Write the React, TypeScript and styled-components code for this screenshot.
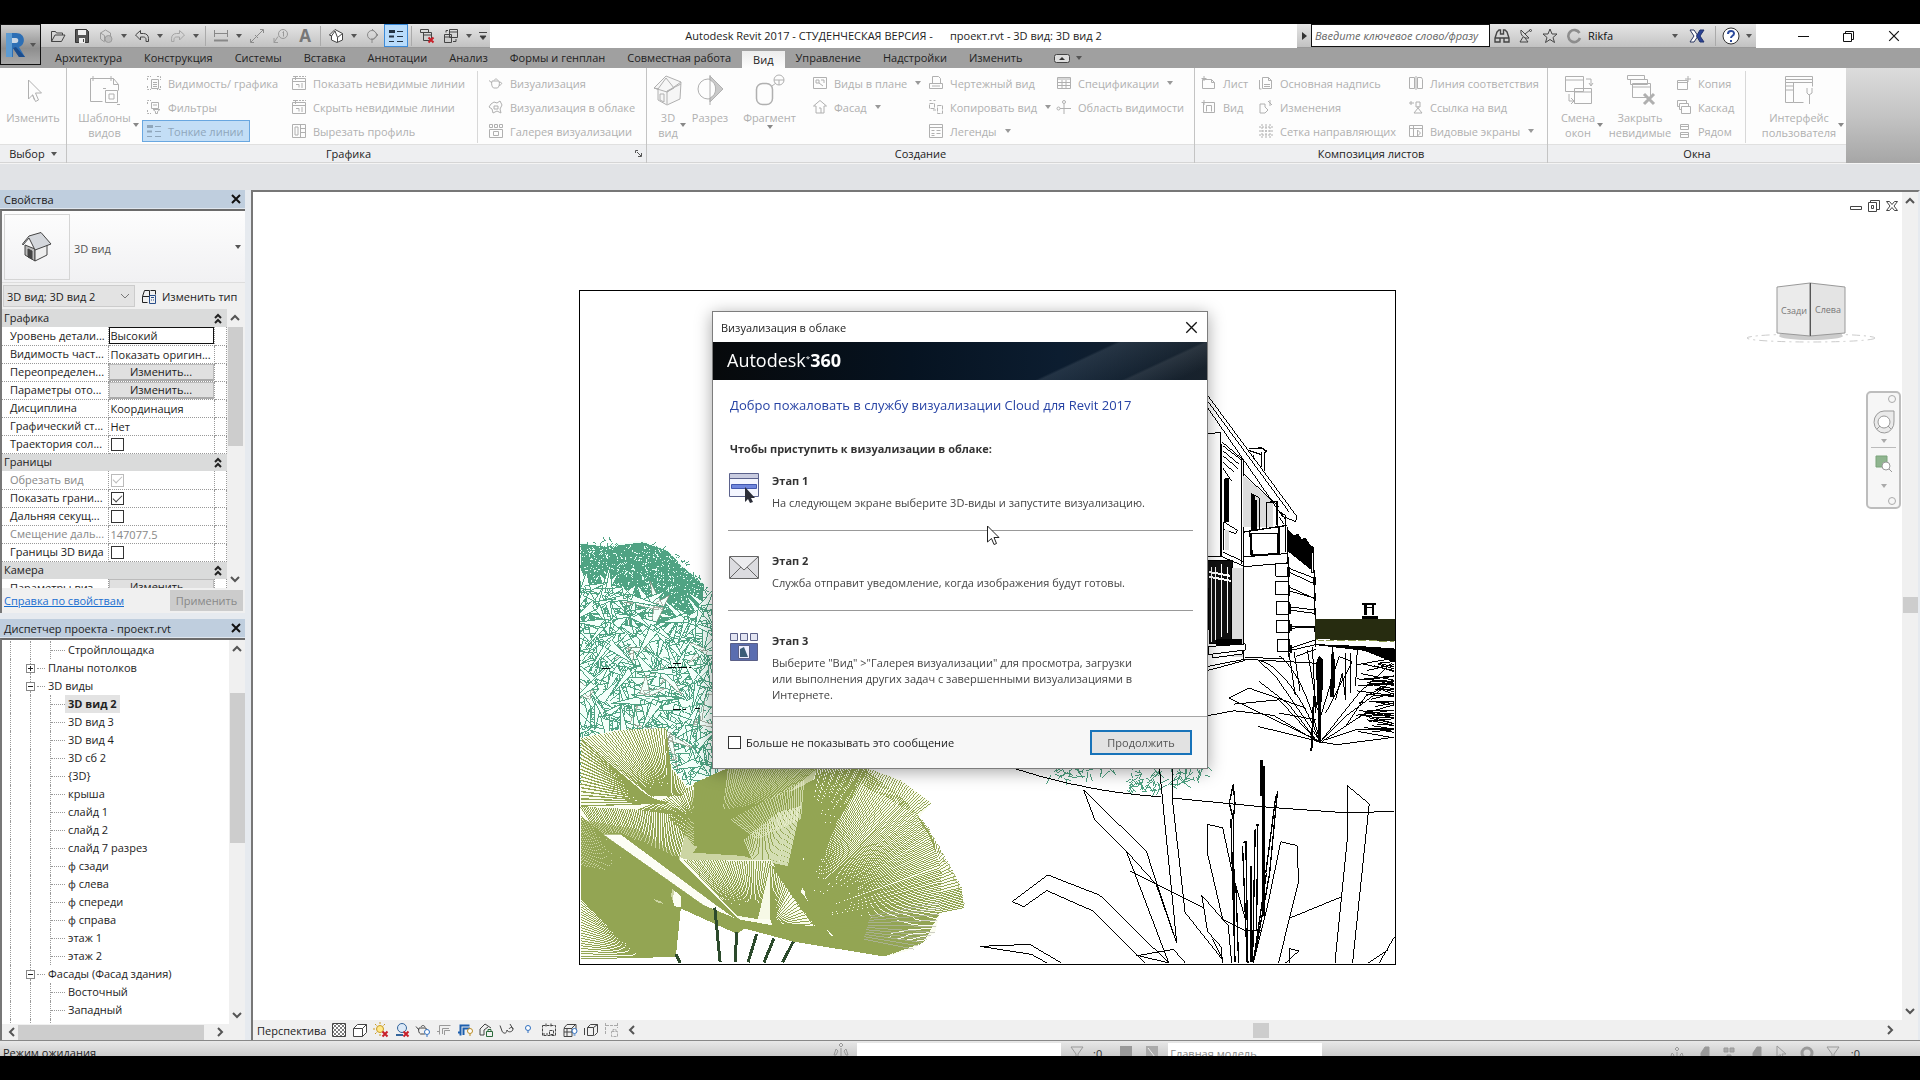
import React from "react";
import styled, { createGlobalStyle, css } from "styled-components";

const FONT = '"Open Sans", "Noto Sans", sans-serif';

const GlobalStyle = createGlobalStyle`
  * { box-sizing: border-box; }
  body { margin: 0; background: #000; overflow: hidden; }
  body, button, input, select, table { font-family: ${FONT}; font-size: 11px; color: #1c1c1c; }
  button, input, select { margin: 0; padding: 0; border: 0; background: none; border-radius: 0; }
  button { white-space: nowrap; }
  svg { display: block; flex: none; }
`;

/* ---------- icons ---------- */

const RED_X = <path d="M9.500 9.500l5 5M14.500 9.500l-5 5" stroke="#c8202a" strokeWidth="2" />;
const BULB = (x: number, y: number, c = "#2f6fc0") => (
  <g stroke={c} fill="#fff"><circle cx={x} cy={y} r="2.500" /><path d={`M${x - 1} ${y + 4}h2`} /></g>
);
const PAGE = <path d="M4.500 2.500h6l3 3v8h-9zM10.500 2.500v3h3" />;

const icons: Record<string, React.ReactNode> = {
  open: <path d="M1.500 13.500v-10h4l1 1.500h6v2M1.500 13.500l3.500-6.500h10l-3.500 6.500z" />,
  save: <><path d="M1.500 1.500h11l2 2v11h-13z" fill="#555" stroke="#333" /><path d="M4 2h8v5H4zM5 10h6v5H5z" fill="#eee" stroke="none" /><path d="M9.500 11v3" /></>,
  sync: <g stroke="#9b9b9b"><path d="M2.500 5l5-3 5 3v3M2.500 5v6l4 3M2.500 5l4 2.500v6" /><circle cx="10.500" cy="11" r="3.500" fill="#bbb" /></g>,
  undo: <path d="M1.500 7l5-4.500v3h3c3 0 5 2 5 5v3h-2.500v-2c0-1.500-1-2.500-2.500-2.500h-3v3z" />,
  redo: <path d="M14.500 7l-5-4.500v3h-3c-3 0-5 2-5 5v3h2.500v-2c0-1.500 1-2.500 2.500-2.500h3v3z" stroke="#a5a5a5" />,
  dim: <g stroke="#888"><path d="M1.500 2v7M14.500 2v7M2 5.500h12" /><path d="M1 12.500h14" strokeWidth="2" /></g>,
  measure: <path d="M2 14L14 2M1.500 11v3.500H5M11 1.500h3.500V5M6 7l3 3" stroke="#8b8b8b" />,
  tag: <g stroke="#999"><circle cx="10" cy="6" r="4.500" /><path d="M1 14.500l4-6M9.500 4.500l1-1v5M1 10v4.500h4" /></g>,
  house: <><path d="M1.500 7L7 1.500l7.500 4V12L9 14.500 3.500 12V8z" fill="#fff" /><path d="M1.500 7l2 1L7 3l2.500 6.500V14M9.500 9.500l5-4" /></>,
  section: <g stroke="#8a8a8a"><circle cx="8" cy="7" r="4.500" /><path d="M8 1l6 6-6 5M8 10v5" /></g>,
  thin: <g><path d="M1 3.500h6" strokeWidth="3" /><path d="M1 8.500h5" strokeWidth="2" /><path d="M1 13.500h5M9 3.500h6M9 8.500h6M9 13.500h6" /></g>,
  closeHidden: <><path d="M1.500 1.500h8v3h-8zM4.500 4.500h8v8h-8zM4.500 7h8" />{RED_X}</>,
  switchWin: <path d="M6.500 1.500h8v8h-8zM6.500 4h8M1.500 6.500h7v8h-7zM1.500 9h7M3 4.500V2.500h2M13 11v2.500h-3" />,
  custom: <path d="M4 4.500h8M5 8l3 3.500L11 8z" fill="#333" />,
  binoc: <path d="M3 4l2-2h1.500v4h3V2H11l2 2 2 6v4h-5v-4H6v4H1v-4zM1 10h5M10 10h5" strokeWidth="1.400" />,
  sat: <><path d="M3 2c-1 5 3 9 8 8zM7 6l5-4M5 9l-3 5h8l-3-4" /><circle cx="12.500" cy="2.500" r="1" /></>,
  star: <path d="M8 1l2 5h5l-4 3.500 1.500 5L8 11.500l-4.500 3 1.500-5L1 6h5z" />,
  cring: <path d="M13.500 5A6 6 0 1 0 14 10" stroke="#8d8d8d" strokeWidth="2.600" />,
  exch: <><path d="M1 2h4l4 6-4 6H1l4-6z" fill="#fff" stroke="#2a3660" /><path d="M15 2h-4L7.500 8l3.500 6h4l-4-6z" fill="#2a4296" stroke="#22346e" /></>,
  cursor: <path d="M4 1v11.500l3-3 2 5 2-1-2-4.500h4z" />,
  sheetList: <><path d="M1.500 5v-3.500H5M11 1.500h3.500V5M1.500 11v3.500H5M14.500 11v3.500H11" strokeDasharray="2 1" /><path d="M5.500 4.500h7v9h-7zM7 7.500h4M7 9.500h4M7 11.500h4" /></>,
  filter: <><path d="M1.500 5v-3.500H5M1.500 11v3.500H5" strokeDasharray="2 1" /><path d="M5.500 3.500h7v6h-7zM7 6h4M7 10.500h7l-2.500 2v2h-2v-2z" /></>,
  hidden: <><path d="M1.500 14.500v-11h13v11zM4.500 1v4M1 6.500h14M5 9.500h3v3M11 8v5" /><path d="M2 1.500h13" strokeDasharray="2 1" /></>,
  profile: <path d="M1.500 1.500h13v13h-13zM4 4h3v8H4zM9.500 2v12M10 5.500h4M10 9.500h4" />,
  teapot: <path d="M4 6h7c1 3 0 6-1.500 7h-4C4 12 3 9 4 6zM4 8L1 5.500M11 7.500c3-1 4 2 0 3M6 5.500c1-2 3-2 4 0" />,
  cloudpot: <path d="M3 5l3-2 3 1 3-2 2 4-2 4 1 4-4-2-4 2-1-4-3-2zM6 7h4v3H6z" />,
  gallery: <path d="M1.500 1.500h3v3h-3zM6.500 1.500h3v3h-3zM11.500 1.500h3v3h-3zM1.500 6.500h13v8h-13zM5.500 8.500h5v4h-5z" />,
  plan: <path d="M1.500 2.500h13v11h-13zM4 5h3v3H4zM7 8l4 3M9 5h3v3" />,
  facade: <path d="M8 1.500L14.500 7H12v7H4V7H1.500zM7 9h2v5" />,
  draft: <path d="M4.500 1.500h6l2 2v5h-8zM1.500 8.500h13v5h-13zM4 11h8" />,
  dup: <path d="M1.500 1.500h2M5.500 1.500h2M1.500 4.500h5v5h-5zM9.500 6.500h5v8h-5zM8 11H5" strokeDasharray="4 1" />,
  legend: <path d="M1.500 1.500h13v13h-13zM1.500 4.500h13M3.500 7.500h3M3.500 10.500h3M8.500 7.500h4M8.500 10.500h4M3.500 12.500h3" />,
  sched: <path d="M1.500 2.500h13v11h-13zM1.500 4h13M1.500 7.500h13M1.500 10.500h13M6 5v8M10 5v8" />,
  scope: <><path d="M8 5v10M4 9.500h11" /><circle cx="8" cy="3" r="1.500" /><circle cx="2.500" cy="9.500" r="1.500" /></>,
  sheet: <><path d="M1.500 4.500h9l3 3v6h-12zM10.500 4.500v3h3" /><path d="M3 1v5M.5 3.500h5" /></>,
  viewSheet: <><path d="M2.500 3.500h11v10h-11z" /><path d="M5.500 6.500h5v6M5.500 6.500v6M3 1v5M.5 3.500h5" /></>,
  page: <>{PAGE}<path d="M6 9.500h6M6 11.500h6M1.500 5v9h2" /></>,
  revise: <path d="M2 5h5v3l3 3-3 3H2zM10 2l4 4M12 1v6" />,
  gridIc: <path d="M1 4h14M1 8h14M1 12h14M4 1v14M8 1v14M12 1v14" strokeDasharray="2 1" />,
  match: <path d="M1.500 2.500h5v11h-5zM9.500 2.500h4l1 2v9h-5zM8 1v14" />,
  ref: <path d="M1 4h5M3 2v4M8 3h4v5H8zM6 14l4-5 4 5zM10 9v-2" />,
  viewport: <path d="M1.500 2.500h13v11h-13zM1.500 5.500h13M5.500 2.500v11M9.500 7v6l3-3z" />,
  copyWin: <path d="M1.500 5.500h10v9h-10zM1.500 7.500h10M12 1v6M9 4h6" />,
  cascade: <path d="M1.500 1.500h9v3M1.500 1.500v6h2M3.500 4.500h9v3M3.500 4.500v6h2M5.500 7.500h9v7h-9z" />,
  tile: <path d="M4.500 1.500h8v5h-8zM4.500 9.500h8v5h-8zM4.500 3.500h8M4.500 11.500h8" />,
  detail: <><path d="M1.500 1.500h13v13h-13z" fill="#fff" /><path d="M2 2l12 12M2 6l8 8M2 10l4 4M6 2l8 8M10 2l4 4M14 2L2 14M10 2L2 10M6 2L2 6M14 6l-8 8M14 10l-4 4" strokeWidth=".7" /></>,
  box: <path d="M1.500 6.500h9v8h-9zM1.500 6.500l4-4h9v8l-4 4M10.500 6.500l4-4" fill="#fff" />,
  sunOff: <><circle cx="7" cy="7" r="3.500" stroke="#c99a22" fill="#ffe98c" /><path d="M7 0v2M7 12v2M0 7h2M2 2l1.500 1.500M12 2l-1.500 1.500M2 12l1.500-1.500" stroke="#c99a22" />{RED_X}</>,
  shadowOff: <><circle cx="8" cy="6" r="4.500" fill="#dce9f7" stroke="#34659c" /><path d="M2 13h7" stroke="#34659c" strokeWidth="2" />{RED_X}</>,
  render: <><path d="M4 6h7c1 3 0 5-1.500 6h-4C4 11 3 9 4 6zM4 8L1 4.500M6 5c1-2 3-2 4 0" />{BULB(12, 10)}</>,
  crop: <path d="M3.500 12.500v-9h11M6.500 12V6.500H13M1 9.500h3M8.500 13V8.500H14" stroke="#999" />,
  cropShow: <><path d="M3.500 13.500v-10h9M6.500 13V6.500H13M1 10.500h3" stroke="#1c5fae" strokeWidth="2" />{BULB(13, 9, "#b98a20")}</>,
  lock3d: <><path d="M2 7l5-5 6 4M2 7v6h4M6 13V8l4-3" /><path d="M8.500 9.500h6v5h-6zM10 9V7.500h3V9" stroke="#2a6a3a" /></>,
  glasses: <path d="M1 3.500l2 5.500c1 3 5 3 5-1M8 8c1 3 6 2 6-1 0-2-3-2-4 0M14 7L11 2" />,
  bulb: BULB(8, 6),
  temp: <path d="M1.500 3.500h13v10h-13zM5 1.500v3M10 1.500v3M8.500 8.500h4v4h-4zM1 12h6" strokeDasharray="3 1" />,
  analytic: <><path d="M2 6.500h8v8H2zM5 6v8M2 10h8M5 2.500h9v8M10 6l4-4M5 2.500L2 6" />{BULB(12.500, 9)}</>,
  displace: <path d="M4.500 5.500h6v8h-6zM4.500 5.500l3-3h7v8l-3 3M10.500 5.500l4-3M1.500 6v7" />,
  constr: <path d="M1.500 1v12M13.500 1v5M2 3.500h11M7.500 9.500h6v5h-6zM9 9V7.500h3V9" stroke="#aaa" strokeDasharray="3 1" />,
  typeEdit: <><path d="M1.500 8.500l2-6h5v6zM9.500 2.500h5v4M1.500 8.500v6h5" /><path d="M8.500 7.500h6v8h-6zM10 9.500h3M10 12h1M12 12h1" stroke="#2a4f8a" /></>,
  people: <path d="M8 2l2 2-2 2-2-2zM3 8l2 2-2 4H1zM13 8l-2 2 2 4h2zM8 7v8" />,
  funnel: <path d="M2 2h12l-5 7v6l-2-2V9z" />,
  blockA: <path d="M2 1h12v14H2z" fill="#999" stroke="none" />,
  blockB: <><path d="M2 1h12v14H2z" fill="#aaa" stroke="none" /><path d="M4 3l7 9" stroke="#eee" /></>,
  link: <path d="M3 3h4v4H3zM9 3h4v4H9zM6 10h4v5H6z" fill="#aaa" />,
  pin: <path d="M6 15V8l4-6h4v13z" fill="#999" stroke="#999" />,
  gear: <circle cx="8" cy="8" r="5" strokeWidth="3" />,
};

const Icon = ({ name, size = 16 }: { name: string; size?: number }) => (
  <svg width={size} height={size} viewBox="0 0 16 16" fill="none" stroke="currentColor" aria-hidden>
    {icons[name]}
  </svg>
);

const bigIcons: Record<string, React.ReactNode> = {
  cursor: <path d="M11.500 6v19l4-4 2 5M11.500 6l13 13h-6l3 7-3 1.500-3-7" />,
  template: <path d="M1.500 4.500h23l5 6v6M24.500 4.500v6h5M1.500 4.500v23h12M4 2v5M22 2v5M16.500 16.500h12v12h-12zM14 14.500h3M28 30.500h3M20 20h5v5h-5z" />,
  house: <><path d="M2 14L14 2l15 6-1 17-13 6-9-5V15z" fill="#f6f6f6" /><path d="M2 14l4 1 8-11 8 10-7 4 14-10M15 30V17l14-7M2 14l13 4M8 20h4v8l-4-2z" /></>,
  section: <><circle cx="14" cy="15" r="10" /><path d="M16 2l13 13-13 13V24a10 10 0 0 0 0-18z" fill="#c9c9c9" /><path d="M16 1v30" /></>,
  callout: <><rect x="2.500" y="9.500" width="16" height="21" rx="6" strokeWidth="1.500" /><circle cx="25" cy="6" r="5" /><path d="M18 12l4-3M20 6h10M25 6v5" /></>,
  swap: <path d="M3.500 2.500h18v15h-18zM3.500 6h18M12.500 14.500h17v15h-17zM12.500 18h17M24 5h5v6M27 9l2 3 2-3M7 20v7h4M9 24l3 3-3 3" />,
  closeHid: <><path d="M3.500 1.500h17v4h-17zM6.500 5.500h17v5h-17zM8.500 9.500h18v14h-18zM8.500 13h18" /><path d="M20 20l10 10M30 20L20 30" strokeWidth="3" /></>,
  ui: <path d="M2.500 2.500h27v6h-27zM2.500 5.500h27M2.500 8.500h8v20h-8zM2.500 12h8M2.500 16h8M10.500 28.500h10M10.500 8.500h19v4M24 14v5l2 2 3-2v-5M26.500 21v9" />,
};
const BigIcon = ({ name }: { name: string }) => (
  <svg width="32" height="32" viewBox="0 0 32 32" fill="none" stroke="currentColor" aria-hidden>{bigIcons[name]}</svg>
);

const Caret = styled.span`
  width: 0; height: 0; flex: none;
  border: 3px solid transparent; border-top: 4px solid #555; border-bottom: 0;
`;
const Chevron = ({ dir }: { dir: "up" | "down" | "left" | "right" }) => {
  const d = { up: "M2 8l4-4 4 4", down: "M2 4l4 4 4-4", left: "M8 2L4 6l4 4", right: "M4 2l4 4-4 4" }[dir];
  return <svg width="12" height="12" viewBox="0 0 12 12" fill="none" stroke="#555" strokeWidth="2"><path d={d} /></svg>;
};
const Cross = ({ size = 10, weight = 2 }: { size?: number; weight?: number }) => (
  <svg width={size} height={size} viewBox="0 0 10 10" stroke="#111" strokeWidth={weight}><path d="M1 1l8 8M9 1L1 9" /></svg>
);

/* ---------- window shell ---------- */

const Screen = styled.div`
  height: 100vh; padding: 24px 0; background: #000; display: flex; flex-direction: column;
`;
const Window = styled.div`
  flex: 1; min-height: 0; display: flex; flex-direction: column; background: #e1e3e6; overflow: hidden;
`;
const Header = styled.header`display: flex; flex: none; background: #a0a0a0; height: 44px;`;
const AppButton = styled.button`
  width: 41px; height: 41px; display: flex; align-items: center; justify-content: center; gap: 4px;
  border: 1px solid #111; background: linear-gradient(#cfcfcf, #8e8e8e 60%, #a9a9a9);
`;
const HeaderRows = styled.div`flex: 1; min-width: 0;`;
const TitleBar = styled.div`height: 24px; display: flex; background: #fff;`;
const Tools = styled.div`
  display: flex; align-items: center; background: linear-gradient(#e6e6e6, #c2c2c2);
  border-bottom: 1px solid #999; color: #444;
`;
const QuickTools = styled(Tools)`width: 449px; padding-left: 5px;`;
const ToolButton = styled.button<{ $w?: number; $on?: boolean }>`
  width: ${p => p.$w ?? 24}px; height: 23px; display: grid; place-items: center; color: inherit;
  ${p => p.$on && css`background: #b9dcfb; border: 1px solid #3b8ad8; color: #223344;`}
`;
const ToolSep = styled.span`width: 1px; height: 20px; margin: 0 3px; background: #aaa;`;
const BigA = styled.span`font: bold 17px/20px ${FONT}; color: #777;`;
const WindowTitle = styled.h1`
  flex: 1; margin: 0; font-weight: 400; font-size: 11px; line-height: 24px; text-align: center; white-space: pre;
`;
const InfoCenter = styled(Tools)`width: 459px;`;
const SearchInput = styled.input`
  width: 179px; height: 23px; border: 1px solid #111; background: #fff; padding: 0 3px; font-style: italic;
  &::placeholder { color: #666; opacity: 1; }
`;
const UserName = styled.button`width: 82px; padding-left: 2px; text-align: left; color: #111;`;
const WinButtons = styled.div`display: flex; width: 164px; padding-left: 25px; flex: none;`;
const WinButton = styled.button`width: 45px; display: grid; place-items: center;`;

const Tabs = styled.nav`height: 20px; display: flex; padding-left: 3px; align-items: flex-end;`;
const Tab = styled.button<{ $active?: boolean }>`
  padding: 0 11px; height: 20px; line-height: 20px; color: #222;
  ${p => p.$active && css`background: linear-gradient(#ececec, #fdfdfd); height: 17px; line-height: 17px;`}
`;
const RibbonToggle = styled.button`display: flex; align-items: center; gap: 6px; height: 20px; margin-left: 21px;`;

/* ---------- ribbon ---------- */

const Ribbon = styled.div`display: flex; flex: none; height: 95px; background: #fdfdfd;`;
const Panel = styled.section`
  display: flex; flex-direction: column;
  & + & { border-left: 1px solid #c4c4c4; }
`;
const PanelBody = styled.div<{ $pad?: number }>`
  height: 76px; padding: 3px 0 0 ${p => p.$pad ?? 0}px; display: flex; color: #b2b2b2;
`;
const PanelTitle = styled.div`
  height: 19px; background: #eeeff1; border-top: 1px solid #e0e0e0; border-bottom: 1px solid #d5d5d5; display: flex;
  align-items: center; line-height: 16px;
`;
const PanelName = styled.span`flex: 1; display: flex; align-items: center; justify-content: center; gap: 6px;`;
const Launcher = styled.button`width: 16px; height: 17px; display: grid; place-items: center;`;
const Column = styled.div<{ $w: number }>`width: ${p => p.$w}px; display: flex; flex-direction: column; align-items: flex-start;`;
const SmallButton = styled.button<{ $on?: boolean }>`
  height: 22px; margin: 1px 0; padding: 0 3px; border: 1px solid transparent; display: flex; align-items: center; gap: 6px;
  color: #b0b0b0;
  ${Caret} { border-top-color: #999; margin-left: 2px; }
  ${p => p.$on && css`background: #c3def6; border-color: #69a7e0; color: #8fa6bb; padding-right: 5px;`}
`;
const LargeButton = styled.button<{ $w: number }>`
  width: ${p => p.$w}px; padding-top: 3px; display: flex; flex-direction: column; align-items: center;
  justify-content: flex-start; color: #b0b0b0; line-height: 15px;
  ${Caret} { border-top-color: #888; }
`;
const LargeLabel = styled.span<{ $drop?: boolean }>`
  display: flex; align-items: center; gap: 2px; margin-top: 4px; padding-left: ${p => (p.$drop ? 8 : 0)}px;
  text-align: center; white-space: pre-line;
`;
const RibbonSep = styled.span`width: 1px; height: 72px; margin: 0 6px 0 0; background: #d8d8d8;`;
const RibbonRest = styled.div`flex: 1; background: linear-gradient(#dcdcdc, #c4c4c4 50%, #a6a6a6);`;
const OptionsBar = styled.div`height: 27px; flex: none; border-top: 1px solid #f4f4f4; background: #e1e3e6;`;

type Cmd = { icon: string; label: string; drop?: boolean; on?: boolean };
const Cmds = ({ w, items }: { w: number; items: Cmd[] }) => (
  <Column $w={w}>
    {items.map(i => (
      <SmallButton key={i.label} $on={i.on}>
        <Icon name={i.icon} />
        {i.label}
        {i.drop && <Caret />}
      </SmallButton>
    ))}
  </Column>
);
const Large = ({ w, icon, label, drop, below }: { w: number; icon: string; label: string; drop?: boolean; below?: boolean }) => (
  <LargeButton $w={w}>
    <BigIcon name={icon} />
    <LargeLabel $drop={drop}>{label}{drop && <Caret />}</LargeLabel>
    {below && <Caret />}
  </LargeButton>
);

/* ---------- docked palettes ---------- */

const Workspace = styled.div`flex: 1; min-height: 0; display: flex;`;
const Dock = styled.aside`width: 251px; flex: none; display: flex; flex-direction: column; gap: 6px; background: #e6eaef;`;
const Palette = styled.section<{ $grow?: boolean }>`
  width: 245px; display: flex; flex-direction: column; ${p => p.$grow && css`flex: 1; min-height: 0;`}
`;
const PaletteHead = styled.header`
  height: 19px; flex: none; padding: 0 4px 0 4px; display: flex; align-items: center; justify-content: space-between;
  background: #bfcede; border-bottom: 1px solid #dfe6ee;
`;
const PaletteTitle = styled.h2`margin: 0; font-size: 11px; font-weight: 400;`;
const PaletteBody = styled.div`
  flex: 1; min-height: 0; border-top: 2px solid #6b6b6b; border-left: 2px solid #777; background: #f0f0f0;
  display: flex; flex-direction: column;
`;
const TypeSelector = styled.button`
  height: 72px; padding: 3px 4px 3px 2px; display: flex; align-items: center; gap: 4px; text-align: left; width: 100%;
  background: linear-gradient(#fdfdfd, #f1f1f3); border-bottom: 1px solid #ddd; color: #555;
`;
const TypeThumb = styled.span`width: 66px; height: 66px; border: 1px solid #d5d5d5; display: grid; place-items: center; color: #333;`;
const TypeName = styled.span`flex: 1; padding-top: 3px;`;
const TypeRow = styled.div`height: 26px; display: flex; align-items: center; gap: 6px; padding-left: 1px;`;
const TypeSelect = styled.div`
  width: 132px; height: 22px; border: 1px solid #ccc; background: #e3e3e3; display: flex; align-items: center;
  select { appearance: none; flex: 1; height: 20px; padding-left: 3px; }
`;
const EditType = styled.button`display: flex; align-items: center; gap: 5px; color: #222;`;
const GridArea = styled.div`height: 279px; display: flex; overflow: hidden;`;
const PropTable = styled.table`
  width: 225px; flex: none; border-collapse: collapse; table-layout: fixed; background: #fff; line-height: 16px; height: 0;
  tr { height: 18px; }
  th, td { padding: 0; font-weight: 400; text-align: left; white-space: nowrap; overflow: hidden; }
  tbody th, tbody td { border-bottom: 1px dotted #999; border-right: 1px dotted #999; }
`;
const GroupHead = styled.th`
  && { background: #dadbdb; border: 0; padding: 0 4px 0 2px; color: #222; }
  button { float: right; height: 17px; display: grid; place-items: center; }
`;
const PropName = styled.th<{ $off?: boolean }>`&& { padding-left: 8px; color: ${p => (p.$off ? "#888" : "#1c1c1c")}; }`;
const ValueInput = styled.input<{ $focus?: boolean }>`
  display: block; width: 100%; height: 17px; padding: 0 1px;
  border: 1px solid ${p => (p.$focus ? "#111" : "transparent")};
  &:disabled { color: #888; }
`;
const ValueButton = styled.button`
  display: block; width: 100%; height: 17px; line-height: 14px; background: #e0e0e0; border: 1px solid #bbb;
  border-bottom: 2px solid #aaa; text-align: center;
`;
const Check = styled.input`
  appearance: none; display: grid; place-items: center; width: 13px; height: 13px; margin: 1px 0 0 2px;
  border: 1px solid #333; background: #fff;
  &:checked::after { content: ""; width: 8px; height: 4px; margin-top: -3px; border: solid #444; border-width: 0 0 1px 1px; transform: rotate(-45deg); }
  &:disabled { border-color: #bbb; }
  &:disabled::after { border-color: #bbb; }
`;
const VScroll = styled.div`
  width: 16px; flex: none; display: flex; flex-direction: column; align-items: center; background: #f0f0f0;
  padding: 3px 0;
`;
const HScroll = styled.div`flex: 1; display: flex; align-items: center; background: #f0f0f0; padding: 0 4px;`;
const Thumb = styled.span<{ $w: number; $h: number }>`width: ${p => p.$w}px; height: ${p => p.$h}px; flex: none; background: #cdcdcd;`;
const Gap = styled.span<{ $g: number }>`flex: ${p => p.$g} 0 0;`;
const PropFoot = styled.footer`
  height: 25px; padding: 0 2px; display: flex; align-items: center; justify-content: space-between;
  a { color: #1a6fd0; }
  button { width: 73px; height: 21px; background: #ccc; color: #888; }
`;

const TreeArea = styled.div`flex: 1; min-height: 0; display: flex; background: #fff;`;
const Tree = styled.ul`flex: 1; margin: 0; padding: 1px 0 0; list-style: none; overflow: hidden;`;
const TreeRow = styled.li`height: 18px; display: flex; align-items: stretch; line-height: 17px;`;
const Guide = styled.span`width: 12px; margin-left: 8px; border-left: 1px dotted #999; flex: none; & + & { margin-left: 8px; }`;
const Elbow = styled.span`
  width: 15px; margin-left: 8px; border-left: 1px dotted #999; display: flex; align-items: center;
  &::after { content: ""; flex: 1; border-top: 1px dotted #999; }
`;
const NodeBox = styled.span`
  width: 22px; margin-left: 4px; display: grid; grid-template: 1fr 9px 1fr / 9px 1fr; align-items: center; column-gap: 2px;
  i { justify-self: start; width: 5px; height: 100%; border-right: 1px dotted #999; grid-column: 1; }
  &::after { content: ""; grid-area: 2 / 2; border-top: 1px dotted #999; margin-right: 3px; }
  button { width: 9px; height: 9px; border: 1px solid #888; display: grid; place-items: center; grid-column: 1; }
`;
const Leaf = styled.span<{ $on?: boolean }>`
  padding: 0 3px; ${p => p.$on && css`font-weight: 700; background: #e3e3e3; color: #222;`}
`;
const TreeBottom = styled.div`height: 16px; display: flex; flex: none;`;

const props: { group: string; rows: [string, string, string][] }[] = [
  { group: "Графика", rows: [
    ["Уровень детали...", "focus", "Высокий"], ["Видимость част...", "text", "Показать оригин..."],
    ["Переопределен...", "button", "Изменить..."], ["Параметры ото...", "button", "Изменить..."],
    ["Дисциплина", "text", "Координация"], ["Графический ст...", "text", "Нет"], ["Траектория сол...", "check", ""],
  ] },
  { group: "Границы", rows: [
    ["Обрезать вид", "checkOff", "1"], ["Показать грани...", "check", "1"], ["Дальняя секущ...", "check", ""],
    ["Смещение даль...", "textOff", "147077.5"], ["Границы 3D вида", "check", ""],
  ] },
  { group: "Камера", rows: [["Параметры виз...", "button", "Изменить..."]] },
];

const PropValue = ({ label, kind, value }: { label: string; kind: string; value: string }) => {
  if (kind === "button") return <ValueButton aria-label={label}>{value}</ValueButton>;
  if (kind.startsWith("check")) return <Check type="checkbox" aria-label={label} defaultChecked={!!value} disabled={kind === "checkOff"} />;
  return <ValueInput aria-label={label} defaultValue={value} $focus={kind === "focus"} disabled={kind === "textOff"} />;
};

const tree: [number, string, string?][] = [
  [1, "Стройплощадка"], [0, "Планы потолков", "+"], [0, "3D виды", "-"], [1, "3D вид 2", "on"], [1, "3D вид 3"], [1, "3D вид 4"],
  [1, "3D сб 2"], [1, "{3D}"], [1, "крыша"], [1, "слайд 1"], [1, "слайд 2"], [1, "слайд 7 разрез"], [1, "ф сзади"],
  [1, "ф слева"], [1, "ф спереди"], [1, "ф справа"], [1, "этаж 1"], [1, "этаж 2"], [0, "Фасады (Фасад здания)", "-"],
  [1, "Восточный"], [1, "Западный"], [1, ""],
];

/* ---------- drawing area ---------- */

const View = styled.main`
  flex: 1; min-width: 0; display: flex; flex-direction: column; border-left: 2px solid #777; border-top: 2px solid #777;
  border-right: 2px solid #e6eaef; background: #fff;
`;
const ViewMain = styled.div`flex: 1; min-height: 0; display: flex;`;
const Canvas = styled.div`flex: 1; position: relative; overflow: hidden; background: #fff;`;
const Sheet = styled.svg`position: absolute; left: 326px; top: 98px; border: 1px solid #000;`;
const MdiButtons = styled.div`position: absolute; right: 4px; top: 8px; display: flex; gap: 6px; button { width: 12px; height: 12px; }`;
const CubePlace = styled.svg`position: absolute; right: 22px; top: 88px;`;
const NavBar = styled.div`
  position: absolute; right: 1px; top: 199px; width: 35px; height: 118px; border: 2px solid #bdbdbd; border-radius: 5px;
  background: #f6f6f6; display: flex; flex-direction: column; align-items: center; color: #999; padding: 2px 3px;
  button { color: inherit; display: grid; place-items: center; }
  ${Caret} { border-top-color: #aaa; }
`;
const NavDot = styled.button`align-self: flex-end; width: 8px; height: 8px; border: 1px solid #aaa; border-radius: 4px; flex: none;`;
const NavLine = styled.span`width: 100%; height: 1px; background: #bbb; margin: 4px 0 6px;`;
const ViewBar = styled.div`height: 20px; flex: none; display: flex; background: #f0f0f0; align-items: center; padding-left: 4px;`;
const ScaleLabel = styled.button`width: 71px; text-align: left;`;
const ViewTool = styled.button`width: 21px; height: 20px; display: grid; place-items: center; color: #444;`;
const Corner = styled.span`width: 18px;`;

const StatusBar = styled.footer`
  height: 16px; flex: none; overflow: hidden; display: flex; border-top: 1px solid #888; color: #999;
  background: linear-gradient(#e8e8e8, #cccccc);
`;
const StatusText = styled.span`width: 833px; padding-left: 3px; line-height: 24px; color: #222;`;
const StatusField = styled.input`width: 204px; height: 24px; margin: 2px 0 0 8px; background: #fff;`;
const StatusSelect = styled.select`width: 154px; height: 20px; margin-top: 2px; background: #fff; appearance: none; color: #888; padding-left: 2px;`;
const StatusIcons = styled.div<{ $gap: number }>`display: flex; gap: ${p => p.$gap}px; padding: 4px 8px 0; color: #999;`;
const Count = styled.span`line-height: 18px; color: #333; flex: none;`;
const Push = styled.span<{ $w?: number }>`${p => (p.$w ? css`width: ${p.$w}px;` : css`flex: 1;`)}`;

/* ---------- model drawing ---------- */

type P = [number, number];
const rng = (seed: number) => () => ((seed = (seed * 16807) % 2147483647) / 2147483647);

const along = (pts: P[], t: number): P => {
  const f = t * (pts.length - 1);
  const i = Math.min(Math.floor(f), pts.length - 2);
  if (pts.length === 1) return pts[0];
  const u = f - i;
  return [pts[i][0] + (pts[i + 1][0] - pts[i][0]) * u, pts[i][1] + (pts[i + 1][1] - pts[i][1]) * u];
};
const fan = (a: P[], b: P[], n: number) => {
  let d = "";
  for (let i = 0; i <= n; i++) {
    const p = along(a, i / n);
    const q = along(b, i / n);
    d += `M${p[0].toFixed(0)} ${p[1].toFixed(0)}L${q[0].toFixed(0)} ${q[1].toFixed(0)}`;
  }
  return d;
};
const scribble = (n: number, seed: number, w: number, h: number, ok: (x: number, y: number) => boolean, len: number) => {
  const r = rng(seed);
  let d = "";
  for (let i = 0; i < n; i++) {
    const x = r() * w;
    const y = r() * h;
    if (!ok(x, y)) continue;
    const a = r() * 6.283;
    const l = len * (0.4 + r());
    d += `M${x.toFixed(0)} ${y.toFixed(0)}l${(Math.cos(a) * l).toFixed(0)} ${(Math.sin(a) * l).toFixed(0)}`;
  }
  return d;
};
const shards = (n: number, seed: number, x0: number, y0: number, w: number, h: number, size: number) => {
  const r = rng(seed);
  const out: string[] = [];
  for (let i = 0; i < n; i++) {
    const x = x0 + r() * w;
    const y = y0 + r() * h;
    let d = "";
    const spikes = 2 + Math.floor(r() * 3);
    let a = r() * 6.283;
    for (let k = 0; k < spikes; k++) {
      a += 0.7 + r() * 0.9;
      const l = size * (0.5 + r());
      const b = 8 + r() * 8;
      const nx = Math.cos(a + 1.57) * b;
      const ny = Math.sin(a + 1.57) * b;
      d += `M${(x + nx).toFixed(0)} ${(y + ny).toFixed(0)}L${(x + Math.cos(a) * l).toFixed(0)} ${(y + Math.sin(a) * l).toFixed(0)}L${(x - nx).toFixed(0)} ${(y - ny).toFixed(0)}z`;
    }
    out.push(d);
  }
  return out;
};

const crownTop = (x: number) => (x < 215 ? 64 + 8 * Math.sin(x / 26) : 62 + Math.pow((x - 215) / 190, 2) * 135);
const TEAL = "#4fa383";
const OLIVE = "#93a553";

const Shrub = () => (
  <g transform="translate(570 520) scale(.33333)" stroke={TEAL} strokeWidth="3">
    <path d="M28 66L110 76 215 60 290 88 335 135 400 190 395 240 428 275V800H28z" fill="#f2fff9" stroke="none" />
    <path d="M28 70L110 80 215 66 290 92 335 140 400 194 395 240 350 300 300 320H28z" fill={TEAL} stroke="none" />
    <path d={scribble(900, 7, 410, 250, (x, y) => y > crownTop(x) && y < crownTop(x) + 50, 11)} />
    <path d={scribble(1500, 19, 400, 300, (x, y) => y > crownTop(x) + 10, 4)} stroke="#eafff6" />
    <path d={scribble(700, 31, 428, 800, (x, y) => y > 300, 36)} />
    {shards(155, 11, 30, 250, 400, 545, 76).map((d, i) => <path key={i} d={d} fill="#f3fffa" strokeWidth={i % 9 ? 3 : 2} stroke={i % 9 ? TEAL : "#8a8f80"} />)}
    {shards(9, 5, 40, 200, 200, 100, 76).map((d, i) => <path key={i} d={d} fill="#f6fffb" />)}
    <path d={scribble(160, 57, 428, 800, (x, y) => y > 380 && x > 220, 30)} strokeWidth="2" />
    <path d="M92 446h28M290 442h70M306 430h24M305 570h40M372 566h16" stroke="#000" strokeWidth="4" strokeDasharray="26 6" />
  </g>
);

const Palm = () => (
  <g transform="translate(570 520) scale(.33333)" stroke={OLIVE} strokeWidth="3" fill="none">
    <path d="M28 655L130 632 285 625 300 740 350 800 470 745H890L990 780 1085 850 1045 895 1110 1000 1175 1110 1180 1165 1110 1180 1095 1240 1030 1290 950 1312 670 1265 520 1230 500 1245 330 1165 315 1315H28z" fill="#fbfdf0" stroke="none" />
    <path d="M370 800L470 745H740L690 900 600 1040 340 1020 200 930 28 900V1060L300 1170 330 1000z" fill="#ccd5a3" stroke="none" />
    <path d={fan([[28, 655], [160, 630], [285, 625], [300, 750]], [[240, 830], [270, 830], [295, 832], [300, 830]], 46)} />
    <path d={fan([[28, 660], [28, 860]], [[240, 840], [290, 850]], 18)} strokeWidth="4" />
    <path d={fan([[300, 745], [350, 805]], [[300, 830], [330, 830]], 10)} />
    <path d={fan([[28, 862], [190, 870], [350, 892]], [[170, 1080], [240, 1100], [290, 1170]], 56)} />
    <path d={fan([[200, 870], [300, 830], [390, 785]], [[350, 890], [370, 900], [380, 930]], 26)} />
    <path d={fan([[28, 890], [28, 1060]], [[290, 1100], [310, 1160]], 42)} />
    <path d="M28 1040L150 1060 260 1150 330 1165 315 1310H200L120 1230 28 1140z" fill={OLIVE} stroke="none" />
    <path d={fan([[28, 1130], [28, 1320]], [[210, 1300], [316, 1312]], 24)} />
    <path d={fan([[370, 790], [470, 745], [740, 745]], [[370, 980], [440, 990], [480, 960]], 80)} />
    <path d={fan([[290, 890], [370, 980]], [[560, 860], [700, 800]], 24)} />
    <path d="M365 1000L430 930 480 890 560 870 740 775 700 1000 690 1160 600 1040 520 1010z" fill={OLIVE} stroke="none" />
    <path d={fan([[520, 960], [620, 880], [690, 860]], [[545, 1020], [600, 1030], [650, 1040]], 34)} stroke="#f6fae4" strokeWidth="2" />
    <path d={fan([[480, 900], [700, 780]], [[560, 960], [690, 900]], 30)} stroke="#eef3d4" strokeWidth="2" />
    <path d={fan([[740, 760], [880, 745], [1000, 840], [1080, 930], [1115, 1060], [1110, 1180], [1060, 1270], [950, 1310]], [[690, 1090], [700, 1110], [710, 1140], [720, 1165], [730, 1180], [750, 1210], [780, 1240], [800, 1260]], 150)} />
    <path d={fan([[740, 745], [890, 745]], [[700, 1000], [720, 1060]], 30)} />
    <path d={fan([[890, 745], [990, 782], [1083, 850]], [[860, 790], [960, 840], [1030, 890]], 30)} />
    <path d={fan([[1045, 895], [1120, 1000], [1175, 1105], [1182, 1165]], [[1070, 930], [1105, 1020], [1112, 1120], [1108, 1180]], 36)} />
    <path d="M1045 893l14 18-4 12 22 8-4 14 20 10-4 14 20 12-4 14 18 14-4 14 20 14-4 16 18 12-4 14 18 14-4 16 10 14-4 12 14 18" strokeWidth="2" />
    <path d="M90 945L145 940 320 1020 500 1200 520 1230 330 1130z" fill={OLIVE} stroke="none" />
    <path d="M95 945L150 945 440 1160 520 1210 400 1160z" fill="#fcfdf4" strokeWidth="2" />
    <path d={fan([[145, 940], [310, 1010]], [[470, 1180], [500, 1200]], 14)} strokeWidth="4" />
    <path d="M340 1022H600L650 1100 600 1200 500 1195z" fill="#f6f9e6" stroke="none" />
    <path d={fan([[340, 1022], [600, 1025]], [[500, 1190], [560, 1200]], 36)} />
    <path d={fan([[600, 1040], [660, 1110], [740, 1220], [780, 1255]], [[600, 1200], [602, 1210], [606, 1220], [610, 1230]], 34)} />
    <path d="M600 1035L700 1130 780 1250 760 1256 680 1150z" fill={OLIVE} />
    <path d="M330 1130L500 1200 700 1235 1000 1290 940 1312 670 1268 520 1228 500 1245 330 1168z" fill={OLIVE} stroke="none" />
    <path d={fan([[1110, 1150], [1095, 1240], [1030, 1290]], [[900, 1190], [890, 1225], [880, 1260]], 10)} stroke="#b5b7ae" strokeWidth="2" />
    <g stroke="#2c4a2c" strokeWidth="9">
      <path d="M432 1165L448 1330M498 1238L493 1330M558 1245L532 1330M610 1258L580 1330M668 1268L636 1330M315 1305L328 1332" />
    </g>
  </g>
);

const House = () => {
  const r = rng(91);
  let grass = "";
  for (let i = 0; i < 46; i++) {
    const y = 850 + r() * 230;
    const x = 530 + r() * 70;
    grass += `M${x.toFixed(0)} ${y.toFixed(0)}L646 ${(y + r() * 40 - 20).toFixed(0)}`;
  }
  return (
    <g transform="translate(1180 380) scale(.33333)" stroke="#000" strokeWidth="3" fill="none">
      <path d="M84 43L353 408 350 424 310 408 84 80M84 60L330 395" />
      <path d="M208 205l40-3 14 10-6 6 1 55M222 222v14M246 215v45M210 210l36 12" strokeWidth="4" />
      <path d="M84 160l40-5v375M128 190v340M84 530h45l65 28V240l-65-55M187 235V550" />
      <path d="M130 195l55 42M130 210l50 42M130 225l45 38M130 245l35 30M130 262l27 40" />
      <path d="M192 285l90 80V440H192z" fill="#dcdcdc" stroke="none" />
      <path d="M192 280l108 100M216 340l24 12v95h-24z" />
      <path d="M136 295h12v130h-12zM218 345h8v100h-8z" fill="#000" />
      <path d="M230 360v85" strokeWidth="6" />
      <path d="M134 425l40 25-5 10-35-12v62l-2-85" /><path d="M136 450h12v60h-12z" fill="#ddd" stroke="none" />
      <path d="M130 515l64 30M194 530L325 520 325 548 190 560" />
      <path d="M262 366l34-2v80M294 365v70M262 368v75M215 460h80v62h-80zM210 450l10 75M195 455l130-20M197 530l105-12M300 440v82" strokeWidth="4" fill="none" />
      <path d="M300 395l20 10v110M300 410l14 20M305 395l12 20M325 440V520" />
      <path d="M325 448l20 20 10-8 12 18 12-4 14 22 10 5v72l-75-60z" fill="#000" />
      <path d="M396 518h8v60h-8z" fill="#fff" />
      <path d="M84 540h75v250H90z" fill="#111" />
      <path d="M98 560v225M108 560v220M128 550v220M144 560v200" stroke="#fff" strokeWidth="3" />
      <path d="M90 590l65 12M88 575l65 12" stroke="#fff" strokeWidth="6" />
      <path d="M158 562h34V830H158z" fill="#dcdcdc" stroke="none" /><path d="M193 558V840M158 560V790" />
      <path d="M112 778h74v16h-74z" fill="#000" />
      <path d={scribble(120, 3, 190, 782, (x, y) => x > 108 && y > 756, 12)} stroke="#4c8a34" />
      <path d="M86 800l112-8v18L88 824zM100 824v10l90-12v-12" fill="#fff" />
      <path d="M84 860L196 838 410 850M84 872L196 842M196 832l120 5" />
      <path d="M290 550h38v38h-38zM290 604h38v40h-38zM292 665h38v38h-38zM292 720h38v38h-38zM294 778h38v36h-38z" />
      <path d="M328 530V830M405 570L410 800M328 575l78 36M328 564l78 30M328 620l80 36M328 632l80 22M330 680l78 10M330 690l78 10M330 745l78-4M330 738l78 1M332 805l78-25M332 812l78-18M350 830l60-22" />
      <path d="M328 560v30M330 614v34M332 672v30M334 732v22M336 796v22M406 590v24M408 640v24M408 684v20M408 740v16" strokeWidth="8" />
      <path d="M410 717H646V782L410 776z" fill="#272c10" stroke="#272c10" /><path d="M410 780l236 4" stroke="#8b9a4e" strokeDasharray="24 8" />
      <path d="M550 672h42M560 676v30M582 676v30M550 712h46" strokeWidth="7" /><path d="M556 681h30" />
      <path d="M410 794l120 5 116 8v40l-90-36z" fill="#000" />
      <path d={grass} strokeWidth="3" />
      <path d="M422 1085C380 900 320 840 300 828M422 1085C360 920 280 845 238 842L290 890 420 1080M410 1080L330 975 240 905M422 1085L150 955 210 925 380 985M165 973L300 960 410 1080M300 1000l110 20M84 1008l80-15 120 14 130 78 60 10 170-22M235 1040l185 45" fill="none" />
      <path d="M330 820l18 125M345 815l18 120M385 810l30 180M400 800l10 200M418 840V1080" />
      <path d="M412 850l8-20 12 10-4 120-10 40z" fill="#000" /><path d="M460 800l8 60-4 90-10 0z" fill="#000" />
      <path d="M425 1085L540 940 640 848M425 1010L480 830 520 845 440 1000M500 820v140M515 820v120M535 810L530 920M470 960l20-80 10 80M430 1085L560 1000 646 975M440 1080l90-30 116-5M425 1085L500 1010 646 900M500 1040l60-90 86-45" />
      <path d="M405 950l-8 165M424 900v190M540 970l14-4" strokeWidth="6" />
    </g>
  );
};

const Meadow = () => (
  <g transform="translate(980 760) scale(.33333)" stroke="#000" strokeWidth="3" fill="none">
    <g stroke={TEAL} strokeWidth="3">
      <path d={scribble(520, 23, 690, 118, (x, y) => (x > 200 && x < 420 && y > 20 && y < 62 - Math.abs(x - 260) / 5) || (x > 450 && x < 545 && y > 20 && y < 100) || (x > 575 && y > 20 && y < 85 - (x - 575) / 3), 24)} />
    </g>
    <path d="M108 28C300 90 450 105 545 112M580 116L850 142 1100 160 1246 156" />
    <path d="M312 92L500 275 592 553 530 375 440 275 345 180zM440 275L568 612M452 335L670 445M540 28L592 553M578 28L578 112 617 460 728 600" />
    <path d="M97 427L204 347 360 408 568 612M97 427l34 16 70-49 140 62 155 156M0 562l150-6 95 56M0 562l155 24 46 26M472 590l110-19 36 41M470 588l98 24" />
    <path d="M685 195l45 10 30 140 40 140M685 195v90l45 195M667 408l80 92 10 112M667 408l18 110 40 45 5 49M700 540l30 60M730 480l70 35h44" />
    <path d="M750 130l12-55 5 55-5 50zM755 180l12 430M762 180l5 430M770 380l8 232M792 250l8-3 6 365M790 260l14 352M830 197h6l-4 320M828 210l-8 400M815 320v290" strokeWidth="4" />
    <path d="M852 20V470M846 0v110" strokeWidth="8" /><path d="M895 95l-24 250-45 250M890 110l-30 230M862 340l-40 272" strokeWidth="4" />
    <path d="M905 247l50 12 3 110-60 243M905 247L865 440 822 612M932 477l155-64M930 612v-44l29 8-40 36" />
    <path d="M1105 78l66 55-50 479M1105 78L1106 230 1068 612M1246 535l-45 77M1168 612l60-40" />
  </g>
);

const Model = () => (
  <Sheet width="817" height="675" viewBox="579 290 817 675" shapeRendering="crispEdges" role="img" aria-label="3D вид 2">
    <House />
    <Meadow />
    <Shrub />
    <Palm />
  </Sheet>
);

const ViewCube = () => (
  <CubePlace width="136" height="64" viewBox="1744 280 136 64" fontFamily={FONT}>
    <ellipse cx="1811" cy="338" rx="64" ry="4" fill="none" stroke="#ccc" strokeDasharray="8 4 2 4" />
    <ellipse cx="1811" cy="336" rx="32" ry="4" fill="#ccc" />
    <path d="M1777 287L1810 283V336L1777 333z" fill="#ebebeb" stroke="#999" />
    <path d="M1810 283L1845 287V333L1810 336z" fill="#e4e4e4" stroke="#999" />
    <path d="M1810.500 283V336" stroke="#555" />
    <text x="1794" y="314" textAnchor="middle" fontSize="9" fill="#777">Сзади</text>
    <text x="1828" y="313" textAnchor="middle" fontSize="9" fill="#777">Слева</text>
  </CubePlace>
);

/* ---------- dialog ---------- */

const Overlay = styled.div`position: fixed; inset: 0; display: grid; place-items: center;`;
const Dialog = styled.div`
  position: relative; width: 496px; border: 1px solid #7d7d7d; background: #fff; box-shadow: 0 3px 16px rgba(0, 0, 0, .35);
`;
const DialogTitle = styled.header`
  height: 30px; padding: 0 9px 0 8px; display: flex; align-items: center; justify-content: space-between;
  h2 { margin: 0; font-weight: 400; font-size: 11px; }
`;
const Banner = styled.div`
  height: 38px; padding-left: 14px; color: #fff; font-size: 18px; line-height: 37px;
  background: linear-gradient(155deg, transparent 70%, rgba(70, 85, 100, .4) 71%, rgba(30, 45, 60, .3) 85%, rgba(90, 100, 110, .3) 86%, transparent 95%),
    linear-gradient(90deg, #07090b, #061321 40%, #0c1d30 70%, #18222c);
  sup { font-size: 8px; vertical-align: 6px; line-height: 0; }
`;
const DialogBody = styled.div`padding: 14px 14px 13px 15px; color: #444; line-height: 16px;`;
const Welcome = styled.h3`margin: 0 0 25px 2px; font-size: 13px; line-height: 22px; font-weight: 400; color: #2743a5;`;
const Lead = styled.p`margin: 0 0 16px 2px; font-weight: 700; color: #333;`;
const Step = styled.div`
  display: grid; grid-template-columns: 32px 1fr; column-gap: 12px; padding-bottom: 19px;
  & + & { border-top: 1px solid #999; padding-top: 22px; }
  > svg { margin-left: 1px; }
  h4 { margin: 0 0 6px; font-size: 11px; color: #333; }
  p { margin: 0; white-space: pre-line; }
  &:last-child { padding-bottom: 0; }
`;
const DialogFoot = styled.footer`
  height: 52px; border-top: 1px solid #a5a5a5; background: #f7f7f7; padding: 0 15px; display: flex; align-items: center;
  justify-content: space-between;
  label { display: flex; align-items: center; gap: 5px; }
  ${Check} { margin: 0; }
`;
const Continue = styled.button`width: 102px; height: 25px; border: 2px solid #1873b9; background: #e2e2e2; color: #555;`;
const Pointer = styled.svg`position: absolute; left: 273px; top: 213px;`;

const stepIcons = [
  <svg width="30" height="32" viewBox="0 0 30 32" key="a"><path d="M.5.500h29v23H.5z" fill="#f4f6ff" stroke="#5b628c" /><path d="M1 1h28v4H1z" fill="#c9cce0" /><path d="M1 5.500h28" stroke="#5b628c" /><path d="M2.500 11.500h25v4h-25z" fill="#6f86dd" stroke="#4358ae" /><path d="M16 14v15l3-3 2 4 3-1-2-4h4z" fill="#2b2d38" /></svg>,
  <svg width="30" height="32" viewBox="0 0 30 32" key="b" fill="none" stroke="#666"><path d="M.5 3.500h29v22H.5z" fill="#dcdce0" /><path d="M1 25l11-11M29 25L18 14" /><path d="M1 4l14 13L29 4" fill="#ececef" /></svg>,
  <svg width="30" height="32" viewBox="0 0 30 32" key="c" stroke="#5b6088" fill="#e3e5f2"><path d="M1.500.500h7v7h-7zM11.500.500h7v7h-7zM21.500.500h7v7h-7z" /><path d="M1.500 10.500h27v17h-27z" fill="#5a6db0" /><path d="M9.500 12.500h11v13h-11z" fill="#eef" /><path d="M11 24v-8l4-2 4 10z" fill="#3c5c78" stroke="none" /></svg>,
];
const steps = [
  "На следующем экране выберите 3D-виды и запустите визуализацию.",
  "Служба отправит уведомление, когда изображения будут готовы.",
  'Выберите "Вид" >"Галерея визуализации" для просмотра, загрузки\nили выполнения других задач с завершенными визуализациями в\nИнтернете.',
];

const CloudDialog = () => (
  <Overlay>
    <Dialog role="dialog" aria-label="Визуализация в облаке">
      <DialogTitle><h2>Визуализация в облаке</h2><button aria-label="Закрыть"><Cross size={13} weight={1} /></button></DialogTitle>
      <Banner>Autodesk<sup>*</sup><b>360</b></Banner>
      <DialogBody>
        <Welcome>Добро пожаловать в службу визуализации Cloud для Revit 2017</Welcome>
        <Lead>Чтобы приступить к визуализации в облаке:</Lead>
        {steps.map((s, i) => (
          <Step key={i}>{stepIcons[i]}<div><h4>Этап {i + 1}</h4><p>{s}</p></div></Step>
        ))}
      </DialogBody>
      <DialogFoot>
        <label><Check type="checkbox" />Больше не показывать это сообщение</label>
        <Continue>Продолжить</Continue>
      </DialogFoot>
      <Pointer width="14" height="21" viewBox="0 0 14 21"><path d="M1.500 1v16l4-3.500L8 19.500l2.500-1L8 12.500h5z" fill="#fff" stroke="#222" /></Pointer>
    </Dialog>
  </Overlay>
);

/* ---------- page ---------- */

const tabs = ["Архитектура", "Конструкция", "Системы", "Вставка", "Аннотации", "Анализ", "Формы и генплан", "Совместная работа", "Вид", "Управление", "Надстройки", "Изменить"];
const T = ({ n, label, w, on }: { n?: string; label: string; w?: number; on?: boolean }) => (
  <ToolButton aria-label={label} $w={w} $on={on}>{n ? <Icon name={n} /> : <Caret />}</ToolButton>
);

export default function App() {
  return (
    <Screen>
      <GlobalStyle />
      <Window>
        <Header>
          <AppButton aria-label="Меню приложения">
            <svg width="21" height="26" viewBox="0 0 21 26"><path d="M1 1h10c10 0 10 12 3 14l6 10h-6l-6-9v9H1z" fill="#2d6fb5" /><path d="M7 6h4c3 0 3 5 0 5H7z" fill="#c9d6e4" /><path d="M1 1h6v24H1z" fill="#5d9bd2" /><path d="M8 16l3-1 9 10h-6z" fill="#1b4c8c" /></svg>
            <Caret />
          </AppButton>
          <HeaderRows>
            <TitleBar>
              <QuickTools>
                <T n="open" label="Открыть" /><T n="save" label="Сохранить" /><T n="sync" label="Синхронизировать" /><T w={12} label="Ещё" />
                <T n="undo" label="Отменить" /><T w={12} label="Ещё" /><T n="redo" label="Повторить" /><T w={12} label="Ещё" /><ToolSep />
                <T n="dim" label="Размер" /><T w={12} label="Ещё" /><T n="measure" label="Измерить" /><T n="tag" label="Марка" />
                <ToolButton aria-label="Текст"><BigA>A</BigA></ToolButton><ToolSep />
                <T n="house" label="3D вид по умолчанию" /><T w={12} label="Ещё" /><T n="section" label="Разрез" /><T n="thin" label="Тонкие линии" on /><ToolSep />
                <T n="closeHidden" label="Закрыть невидимые" /><T n="switchWin" label="Смена окон" /><T w={12} label="Ещё" /><T n="custom" w={15} label="Настройка панели" />
              </QuickTools>
              <WindowTitle>{"Autodesk Revit 2017 - СТУДЕНЧЕСКАЯ ВЕРСИЯ -      проект.rvt - 3D вид: 3D вид 2"}</WindowTitle>
              <InfoCenter>
                <ToolButton $w={14} aria-label="Свернуть"><svg width="6" height="8"><path d="M1 0l5 4-5 4z" fill="#333" /></svg></ToolButton>
                <SearchInput aria-label="Поиск" placeholder="Введите ключевое слово/фразу" />
                <T n="binoc" label="Найти" /><T n="sat" label="Связь" /><T n="star" label="Избранное" /><T n="cring" label="Профиль" />
                <UserName>Rikfa</UserName><T w={14} label="Ещё" /><T n="exch" w={30} label="Exchange Apps" /><ToolSep />
                <ToolButton aria-label="Справка"><svg width="18" height="18" viewBox="0 0 18 18"><circle cx="9" cy="9" r="8" fill="#fff" stroke="#333" /><path d="M6 7c0-4 6-4 6-.5C12 9 9 8.500 9 11M9 13v2" fill="none" stroke="#2b4a9c" strokeWidth="2" /></svg></ToolButton>
                <T w={12} label="Ещё" />
              </InfoCenter>
              <WinButtons>
                <WinButton aria-label="Свернуть окно"><svg width="11" height="11"><path d="M0 5.500h11" stroke="#111" /></svg></WinButton>
                <WinButton aria-label="Восстановить"><svg width="11" height="11" fill="none" stroke="#111"><path d="M.5 2.500h8v8h-8zM2.500 2.500v-2h8v8h-2" /></svg></WinButton>
                <WinButton aria-label="Закрыть окно"><Cross size={12} weight={1} /></WinButton>
              </WinButtons>
            </TitleBar>
            <Tabs>
              {tabs.map(t => <Tab key={t} $active={t === "Вид"}>{t}</Tab>)}
              <RibbonToggle aria-label="Свернуть ленту"><svg width="16" height="9"><rect x=".5" y=".5" width="15" height="8" rx="2" fill="#ddd" stroke="#444" /><path d="M5 6l3-3 3 3z" fill="#333" /></svg><Caret /></RibbonToggle>
            </Tabs>
          </HeaderRows>
        </Header>

        <Ribbon>
          <Panel>
            <PanelBody><Large w={66} icon="cursor" label="Изменить" /></PanelBody>
            <PanelTitle><PanelName>Выбор <Caret /></PanelName></PanelTitle>
          </Panel>
          <Panel>
            <PanelBody>
              <Large w={75} icon="template" label={"Шаблоны\nвидов"} drop />
              <Cmds w={145} items={[{ icon: "sheetList", label: "Видимость/ графика" }, { icon: "filter", label: "Фильтры" }, { icon: "thin", label: "Тонкие линии", on: true }]} />
              <Cmds w={190} items={[{ icon: "hidden", label: "Показать невидимые линии" }, { icon: "hidden", label: "Скрыть невидимые линии" }, { icon: "profile", label: "Вырезать профиль" }]} />
              <RibbonSep />
              <Cmds w={162} items={[{ icon: "teapot", label: "Визуализация" }, { icon: "cloudpot", label: "Визуализация  в облаке" }, { icon: "gallery", label: "Галерея  визуализации" }]} />
            </PanelBody>
            <PanelTitle>
              <PanelName>Графика</PanelName>
              <Launcher aria-label="Параметры графики"><svg width="7" height="7" fill="none" stroke="#555"><path d="M.5 3V.5H3M2 2l4 4M6.500 3v3.500H3" /></svg></Launcher>
            </PanelTitle>
          </Panel>
          <Panel>
            <PanelBody>
              <Large w={42} icon="house" label={"3D\nвид"} drop />
              <Large w={42} icon="section" label="Разрез" />
              <Large w={77} icon="callout" label="Фрагмент" below />
              <Cmds w={116} items={[{ icon: "plan", label: "Виды в плане", drop: true }, { icon: "facade", label: "Фасад", drop: true }]} />
              <Cmds w={128} items={[{ icon: "draft", label: "Чертежный вид" }, { icon: "dup", label: "Копировать вид", drop: true }, { icon: "legend", label: "Легенды", drop: true }]} />
              <Cmds w={142} items={[{ icon: "sched", label: "Спецификации", drop: true }, { icon: "scope", label: "Область видимости" }]} />
            </PanelBody>
            <PanelTitle><PanelName>Создание</PanelName></PanelTitle>
          </Panel>
          <Panel>
            <PanelBody $pad={2}>
              <Cmds w={57} items={[{ icon: "sheet", label: "Лист" }, { icon: "viewSheet", label: "Вид" }]} />
              <Cmds w={150} items={[{ icon: "page", label: "Основная надпись" }, { icon: "revise", label: "Изменения" }, { icon: "gridIc", label: "Сетка направляющих" }]} />
              <Cmds w={143} items={[{ icon: "match", label: "Линия соответствия" }, { icon: "ref", label: "Ссылка на вид" }, { icon: "viewport", label: "Видовые экраны", drop: true }]} />
            </PanelBody>
            <PanelTitle><PanelName>Композиция листов</PanelName></PanelTitle>
          </Panel>
          <Panel>
            <PanelBody>
              <Large w={60} icon="swap" label={"Смена\nокон"} drop />
              <Large w={64} icon="closeHid" label={"Закрыть\nневидимые"} />
              <Cmds w={73} items={[{ icon: "copyWin", label: "Копия" }, { icon: "cascade", label: "Каскад" }, { icon: "tile", label: "Рядом" }]} />
              <RibbonSep />
              <Large w={94} icon="ui" label={"Интерфейс\nпользователя"} drop />
            </PanelBody>
            <PanelTitle><PanelName>Окна</PanelName></PanelTitle>
          </Panel>
          <RibbonRest />
        </Ribbon>
        <OptionsBar />

        <Workspace>
          <Dock>
            <Palette>
              <PaletteHead><PaletteTitle>Свойства</PaletteTitle><button aria-label="Закрыть свойства"><Cross /></button></PaletteHead>
              <PaletteBody>
                <TypeSelector>
                  <TypeThumb>
                    <svg width="32" height="32" viewBox="0 0 32 32" stroke="#444"><path d="M4 14v10l10 6V18z" fill="#bbb" /><path d="M14 18l12-5v11l-12 6z" fill="#eee" /><path d="M1.500 13L8 5l12-3.500L30 13l-16 6-6-12-6 7z" fill="#d4d7dc" /><path d="M7 18l4 2v8l-4-2z" fill="#444" /></svg>
                  </TypeThumb>
                  <TypeName>3D вид</TypeName>
                  <Caret />
                </TypeSelector>
                <TypeRow>
                  <TypeSelect><select aria-label="Экземпляр"><option>3D вид: 3D вид 2</option></select><svg width="18" height="12" viewBox="0 0 18 12" fill="none" stroke="#777"><path d="M5 4l4 4 4-4" /></svg></TypeSelect>
                  <EditType><Icon name="typeEdit" />Изменить тип</EditType>
                </TypeRow>
                <GridArea>
                  <PropTable>
                    <colgroup><col style={{ width: 106 }} /><col style={{ width: 106 }} /><col /></colgroup>
                    <tbody>
                      {props.map(g => (
                        <React.Fragment key={g.group}>
                          <tr><GroupHead colSpan={3}>{g.group}<button aria-label={"Свернуть " + g.group}><svg width="9" height="11" viewBox="0 0 9 11" fill="none" stroke="#222" strokeWidth="2"><path d="M1 5l3-3 3 3M1 10l3-3 3 3" /></svg></button></GroupHead></tr>
                          {g.rows.map(([label, kind, value]) => (
                            <tr key={label}>
                              <PropName scope="row" $off={kind.endsWith("Off")}>{label}</PropName>
                              <td><PropValue label={label} kind={kind} value={value} /></td>
                              <td />
                            </tr>
                          ))}
                        </React.Fragment>
                      ))}
                    </tbody>
                  </PropTable>
                  <VScroll><Chevron dir="up" /><Gap $g={3} /><Thumb $w={15} $h={119} /><Gap $g={130} /><Chevron dir="down" /></VScroll>
                </GridArea>
                <PropFoot><a href="#help">Справка по свойствам</a><button disabled>Применить</button></PropFoot>
              </PaletteBody>
            </Palette>
            <Palette $grow>
              <PaletteHead><PaletteTitle>Диспетчер проекта - проект.rvt</PaletteTitle><button aria-label="Закрыть диспетчер"><Cross /></button></PaletteHead>
              <PaletteBody>
                <TreeArea>
                  <Tree>
                    {tree.map(([level, label, mark], i) => (
                      <TreeRow key={i}>
                        <Guide />
                        {level ? <><Guide /><Elbow /><Leaf $on={mark === "on"}>{label}</Leaf></> : (
                          <>
                            <NodeBox><i /><button aria-label={label}><svg width="5" height="5"><path d={mark === "+" ? "M0 2.500h5M2.500 0v5" : "M0 2.500h5"} stroke="#222" /></svg></button><i /></NodeBox>
                            <span>{label}</span>
                          </>
                        )}
                      </TreeRow>
                    ))}
                  </Tree>
                  <VScroll><Chevron dir="up" /><Gap $g={38} /><Thumb $w={15} $h={150} /><Gap $g={164} /><Chevron dir="down" /></VScroll>
                </TreeArea>
                <TreeBottom><HScroll><Chevron dir="left" /><Thumb $w={186} $h={15} /><Gap $g={2} /><Chevron dir="right" /><Gap $g={3} /></HScroll></TreeBottom>
              </PaletteBody>
            </Palette>
          </Dock>

          <View>
            <ViewMain>
              <Canvas>
                <Model />
                <MdiButtons>
                  <button aria-label="Свернуть вид"><svg width="12" height="12" fill="#fff" stroke="#444"><path d="M.5 6.500h11v3H.5z" /></svg></button>
                  <button aria-label="Развернуть вид"><svg width="12" height="12" fill="none" stroke="#444"><path d="M.5 2.500h8v9h-8zM2.500 2.500v-2h9v9h-3M3.500 5.500h2v3h-2z" /></svg></button>
                  <button aria-label="Закрыть вид"><svg width="12" height="12" fill="#fff" stroke="#444"><path d="M.5 1.500h3l2.500 3 2.500-3h3L8 6l3.500 4.500h-3L6 7.500l-2.500 3h-3L4 6z" /></svg></button>
                </MdiButtons>
                <ViewCube />
                <NavBar>
                  <NavDot aria-label="Закрыть панель" />
                  <button aria-label="Штурвал"><svg width="24" height="36" viewBox="0 0 24 36" fill="none" stroke="currentColor"><path d="M12 8h10v10a10 11 0 1 1-10-10z" fill="#eaeaea" /><circle cx="12" cy="19" r="6" fill="#fff" /><path d="M5 26l3-3M19 26l-3-3" /></svg></button>
                  <Caret />
                  <NavLine />
                  <button aria-label="Масштаб"><svg width="18" height="20" viewBox="0 0 18 20" fill="none" stroke="currentColor"><path d="M1 2h11v11H1z" fill="#8fb58f" stroke="#7aa37a" /><circle cx="11" cy="12" r="4" fill="#fff" /><path d="M14 15l3 3" /></svg></button>
                  <Gap $g={1} /><Caret /><Gap $g={1} />
                  <NavDot aria-label="Параметры панели" />
                </NavBar>
              </Canvas>
              <VScroll><Chevron dir="up" /><Gap $g={391} /><Thumb $w={15} $h={16} /><Gap $g={393} /><Chevron dir="down" /></VScroll>
            </ViewMain>
            <ViewBar>
              <ScaleLabel>Перспектива</ScaleLabel>
              {["detail", "box", "sunOff", "shadowOff", "render", "crop", "cropShow", "lock3d", "glasses", "bulb", "temp", "analytic", "displace", "constr"].map(n => (
                <ViewTool key={n} aria-label={n}><Icon name={n} /></ViewTool>
              ))}
              <HScroll><Chevron dir="left" /><Gap $g={615} /><Thumb $w={16} $h={15} /><Gap $g={615} /><Chevron dir="right" /></HScroll>
              <Corner />
            </ViewBar>
          </View>
        </Workspace>

        <StatusBar>
          <StatusText>Режим ожидания</StatusText>
          <Icon name="people" />
          <StatusField aria-label="Рабочий набор" />
          <StatusIcons $gap={8}><Icon name="funnel" /><Count>:0</Count></StatusIcons>
          <StatusIcons $gap={10}><Icon name="blockA" /><Icon name="blockB" /></StatusIcons>
          <StatusSelect aria-label="Вариант"><option>Главная модель</option></StatusSelect>
          <Push />
          <StatusIcons $gap={10}><Icon name="people" /><Icon name="pin" /><Icon name="link" /><Icon name="pin" /><Icon name="cursor" /><Icon name="gear" /><Icon name="funnel" /><Count>:0</Count></StatusIcons>
          <Push $w={52} />
        </StatusBar>
      </Window>
      <CloudDialog />
    </Screen>
  );
}
